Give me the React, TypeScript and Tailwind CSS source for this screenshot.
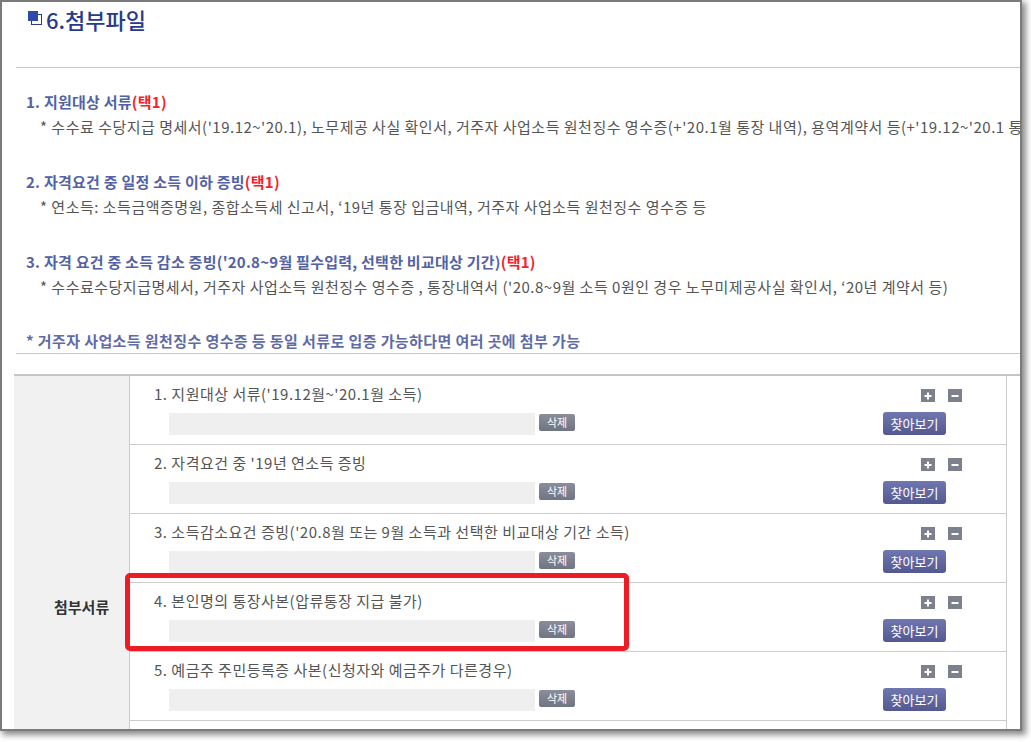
import React from 'react';

const items = [
  {
    title: '1. 지원대상 서류',
    desc: "* 수수료 수당지급 명세서('19.12~'20.1), 노무제공 사실 확인서, 거주자 사업소득 원천징수 영수증(+'20.1월 통장 내역), 용역계약서 등(+'19.12~'20.1 통장 내역)",
  },
  {
    title: '2. 자격요건 중 일정 소득 이하 증빙',
    desc: "* 연소득: 소득금액증명원, 종합소득세 신고서, ‘19년 통장 입금내역, 거주자 사업소득 원천징수 영수증 등",
  },
  {
    title: "3. 자격 요건 중 소득 감소 증빙('20.8~9월 필수입력, 선택한 비교대상 기간)",
    desc: "* 수수료수당지급명세서, 거주자 사업소득 원천징수 영수증 , 통장내역서 ('20.8~9월 소득 0원인 경우 노무미제공사실 확인서, ‘20년 계약서 등)",
  },
];

const rows = [
  "1. 지원대상 서류('19.12월~'20.1월 소득)",
  "2. 자격요건 중 '19년 연소득 증빙",
  "3. 소득감소요건 증빙('20.8월 또는 9월 소득과 선택한 비교대상 기간 소득)",
  '4. 본인명의 통장사본(압류통장 지급 불가)',
  '5. 예금주 주민등록증 사본(신청자와 예금주가 다른경우)',
];

const TitleIcon = () => (
  <svg width="16" height="16" viewBox="0 0 16 16" className="shrink-0">
    <rect x="5.5" y="4.5" width="10" height="10" fill="white" stroke="#2b3a8f" strokeWidth="1" />
    <rect x="2" y="1" width="10" height="10" fill="#2f4aa6" />
  </svg>
);

const SmallBtn = ({ minus }: { minus?: boolean }) => (
  <span className="w-[14px] h-[13px] bg-[#7d818d] flex items-center justify-center">
    <svg width="8" height="8" viewBox="0 0 8 8">
      <rect x="0.5" y="3" width="7" height="2" fill="white" />
      {!minus && <rect x="3" y="0.5" width="2" height="7" fill="white" />}
    </svg>
  </span>
);

const FileRow = ({ label }: { label: string }) => (
  <div className="h-[69px] border-b border-[#cccccc] flex">
    <div className="pl-[24px] pt-[8px]">
      <div className="leading-[20px] text-[15px] tracking-[0.5px] text-[#555555] whitespace-nowrap">{label}</div>
      <div className="mt-[9px] pl-[15px] flex items-start gap-[4px]">
        <div className="w-[366px] h-[22px] bg-[#efefef]" />
        <button className="mt-[1px] w-[36px] h-[17px] rounded-[2px] bg-gradient-to-b from-[#8a8e9c] to-[#707483] text-white text-[11px] leading-[17px]">
          삭제
        </button>
      </div>
    </div>
    <div className="ml-auto pr-[44px] pt-[13px] w-[123px] flex flex-col">
      <div className="flex justify-end gap-[13px]">
        <SmallBtn />
        <SmallBtn minus />
      </div>
      <button className="mt-[10px] w-[63px] h-[23px] rounded-[3px] bg-gradient-to-b from-[#7077b0] to-[#535990] text-white text-[13px] leading-[23px]">
        찾아보기
      </button>
    </div>
  </div>
);

export default function App() {
  return (
    <div className="w-[1031px] h-[742px] bg-white font-['Noto_Sans_CJK_KR','Noto_Sans',sans-serif]">
      <div className="relative w-[1022px] h-[731px] border-t-2 border-l-2 border-r-2 border-b-2 border-[#7b7b7b] shadow-[3px_3px_6px_1px_rgba(0,0,0,0.45)] overflow-hidden bg-white">
        {/* title */}
        <div className="h-[65px] pt-[5px] pl-[24px] flex items-start gap-[4px]">
          <div className="pt-[3px]">
            <TitleIcon />
          </div>
          <h2 className="text-[22px] leading-[24px] font-medium text-[#283a8c]">6.첨부파일</h2>
        </div>
        <div className="ml-[14px] border-t border-[#c8c8c8]" />

        {/* guide */}
        <div className="pl-[24px] pt-[21px]">
          {items.map((it, i) => (
            <div key={i} className={i > 0 ? 'mt-[30px]' : ''}>
              <div className="leading-[25px] text-[15px] tracking-[0.25px] font-bold text-[#5262a4] whitespace-nowrap">
                {it.title}
                <span className="text-[#f0242c]">(택1)</span>
              </div>
              <div className="pl-[14px] leading-[25px] text-[15px] tracking-[0.5px] text-[#555555] whitespace-nowrap">{it.desc}</div>
            </div>
          ))}
          <div className="mt-[30px] leading-[24px] text-[15px] tracking-[0.4px] font-bold text-[#5f6ba8] whitespace-nowrap">
            * 거주자 사업소득 원천징수 영수증 등 동일 서류로 입증 가능하다면 여러 곳에 첨부 가능
          </div>
        </div>
        <div className="ml-[14px] border-t border-[#c8c8c8]" />

        {/* table */}
        <div className="mt-[20px] ml-[12px] border-t-2 border-[#c6c6c6] flex">
          <div className="w-[116px] shrink-0 bg-[#f1f1f1] border-r border-[#cccccc] pl-[40px] pt-[218px]">
            <span className="text-[15px] leading-[20px] font-bold text-[#333333]">첨부서류</span>
          </div>
          <div className="w-[877px] shrink-0 border-r border-[#cccccc]">
            {rows.map((r) => (
              <FileRow key={r} label={r} />
            ))}
            <div className="h-[69px]" />
          </div>
          <div className="w-[40px] shrink-0" />
        </div>

        {/* annotation */}
        <div className="absolute left-[123px] top-[571px] w-[504px] h-[78px] border-[5px] border-[#ed1c24] rounded-[5px]" />
      </div>
    </div>
  );
}
